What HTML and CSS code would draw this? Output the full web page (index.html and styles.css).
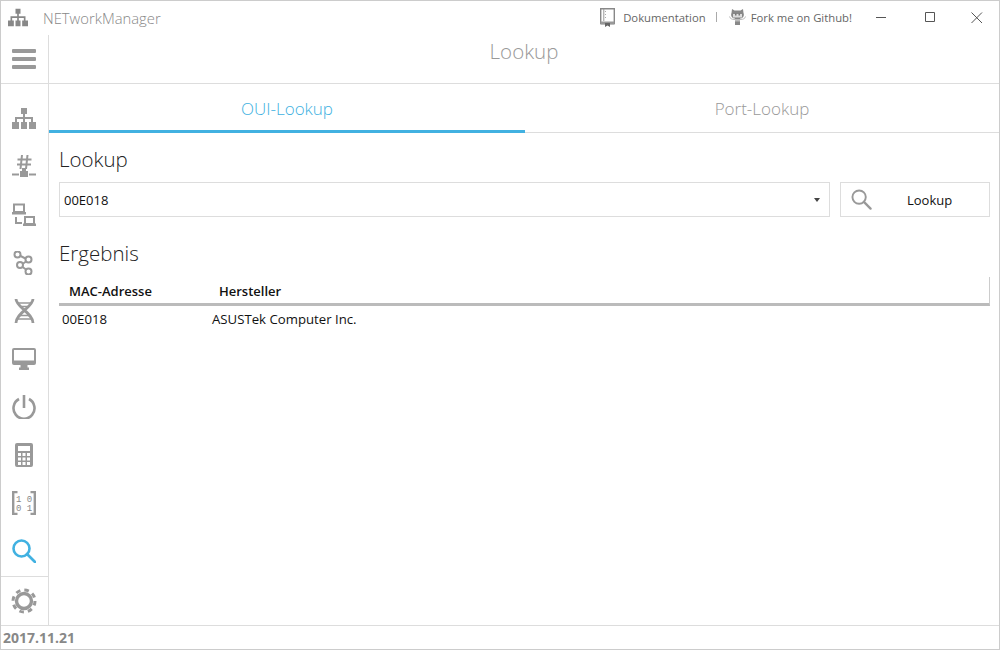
FILE: index.html
```html
<!DOCTYPE html>
<html>
	<head>
		<meta charset="UTF-8">
		<title>NETworkManager</title>
		<link rel="stylesheet" href="styles.css">
	</head>
	<body>
		<div class="window">
			<div class="titlebar">
				<svg class="app-icon" width="20" height="20" viewBox="0 0 24 24"><path d="M9 1h6v6h-2v3h8v5h3v7h-7v-7h2v-3h-6v3h2v7h-6v-7h2v-3H5v3h2v7H0v-7h3v-5h8V7H9z"/></svg>
				<span class="app-name">NETworkManager</span>
				<div class="links">
					<svg class="book-icon" width="15" height="19" viewBox="0 0 15 19"><path d="M.7 15.500V.7h13.600v14.800z" fill="none" stroke="#888" stroke-width="1.400"/><path d="M.7 13.500h13.600v3H.7z" fill="#999"/><path d="M3.800 1v12" stroke="#999"/><path d="M5.500 3v8" stroke="#aaa" stroke-dasharray="1 2"/><path d="M5 15h5v4l-2.500-1.500L5 19z" fill="#666"/></svg>
					<span class="link">Dokumentation</span>
					<span class="sep"></span>
					<svg class="cat-icon" width="17" height="18" viewBox="0 0 17 18"><path d="M3 1l2.500 1.500h6L14 1l.5 4c.6 1.300.5 3-.4 4-.8 1-2.100 1.500-3.100 1.500v6.500H6v-6.500c-1 0-2.300-.5-3.100-1.500-.9-1-1-2.700-.4-4z" fill="#888"/><path d="M4 6h9v3.500H4z" fill="#ddd"/><path d="M6 5.500h1.500v2H6zM9.500 5.500H11v2H9.500z" fill="#777"/><path d="M.5 8.500c.5 2 2 3 5.500 3M16.500 8.500c-.5 2-2 3-5.500 3" stroke="#bbb" fill="none"/><path d="M6 11h5v2.500H6z" fill="#bbb"/></svg>
					<span class="link">Fork me on Github!</span>
				</div>
				<div class="win-buttons">
					<svg width="48" height="32" viewBox="0 0 48 32"><path d="M17 15.500h10" stroke="#555"/></svg>
					<svg width="46" height="32" viewBox="0 0 46 32"><path d="M18.500 10.500h9v9h-9z" fill="none" stroke="#555"/></svg>
					<svg width="46" height="32" viewBox="0 0 46 32"><path d="M18.500 10.500l10.500 10.500M29 10.500L18.500 21" stroke="#555" fill="none"/></svg>
				</div>
			</div>
			<div class="body">
				<div class="sidebar">
					<div class="menu-btn">
						<span class="bar"></span>
						<span class="bar"></span>
						<span class="bar"></span>
					</div>
					<ul class="nav">
						<li><svg class="solid" width="24" height="24" viewBox="0 0 24 24"><path d="M9 1h6v6h-2v3h8v5h3v7h-7v-7h2v-3h-6v3h2v7h-6v-7h2v-3H5v3h2v7H0v-7h3v-5h8V7H9z"/></svg></li>
						<li><svg class="solid" width="24" height="24" viewBox="0 0 24 24"><path d="M10 0l-1.500 14M15.500 0L14 14M5.500 4.500h14M5 9.500h14" stroke="#999" stroke-width="2" fill="none"/><path d="M0 18.500h7v2H0zM17 18.500h7v2h-7z"/><path d="M10 13h4v3h2v6H8v-6h2z"/></svg></li>
						<li><svg class="solid" width="24" height="24" viewBox="0 0 24 24"><path d="M2 1.500h10v7.500H2z" fill="none" stroke="#999" stroke-width="2"/><path d="M0 9h14v2.500H0z"/><path d="M3 14h2v5h5v2H3z"/><path d="M13 14h9v7h-9z" fill="none" stroke="#999" stroke-width="2"/><path d="M11 20.500h13V23H11z"/></svg></li>
						<li><svg class="line" width="24" height="24" viewBox="0 0 24 24" stroke-width="2"><circle cx="5.500" cy="3.500" r="3"/><circle cx="16.500" cy="8.500" r="3"/><circle cx="8" cy="14" r="3"/><circle cx="16.500" cy="20.500" r="3"/><path d="M8.500 5l5 2.500M14 10.500L10.500 13M10.500 16l3.500 2.500"/></svg></li>
						<li><svg class="line" width="21" height="24" viewBox="0 0 21 24" stroke-width="2.800"><path d="M2 0c0 8 17 14 17 24M19 0c0 8-17 14-17 24"/><path d="M3 4h15M6 7.500h9M6 16.500h9M3 20h15" stroke-width="1.500"/></svg></li>
						<li><svg class="solid" width="24" height="24" viewBox="0 0 24 24"><path fill-rule="evenodd" d="M2 1h20a2 2 0 0 1 2 2v13a2 2 0 0 1-2 2h-6.500v2.500H17V23H7v-2.500h1.500V18H2a2 2 0 0 1-2-2V3a2 2 0 0 1 2-2zm0 2v10.500h20V3z"/></svg></li>
						<li><svg class="line" width="24" height="24" viewBox="0 0 24 24" stroke-width="2.600"><path d="M7 4A10.500 10.500 0 1 0 17 4"/><path d="M12 0v13"/></svg></li>
						<li><svg class="solid" width="24" height="24" viewBox="0 0 24 24"><path fill-rule="evenodd" d="M5 0h14a2 2 0 0 1 2 2v20a2 2 0 0 1-2 2H5a2 2 0 0 1-2-2V2a2 2 0 0 1 2-2zm1 3v5h12V3zm0 7v3h3v-3zm4.500 0v3h3v-3zm4.500 0v3h3v-3zM6 14.500v3h3v-3zm4.500 0v3h3v-3zm4.500 0v3h3v-3zM6 19v3h3v-3zm4.500 0v3h3v-3zm4.500 0v3h3v-3z"/></svg></li>
						<li><svg class="line" width="24" height="24" viewBox="0 0 24 24" stroke-width="2.400"><path d="M5.500 1H1.200v22h4.300M18.500 1h4.300v22h-4.300"/><text class="bits" x="12" y="10.500">1 0</text><text class="bits" x="12" y="20">0 1</text></svg></li>
						<li><svg class="current-icon" width="24" height="24" viewBox="0 0 24 24"><circle cx="9.500" cy="9.500" r="8"/><path d="M15 15l8 8" stroke-linecap="round"/></svg></li>
					</ul>
					<div class="settings-btn">
						<svg class="solid" width="26" height="26" viewBox="0 0 26 26"><circle cx="13" cy="13" r="7.500" fill="none" stroke="#999" stroke-width="3.400"/><circle cx="13" cy="13" r="11" fill="none" stroke="#999" stroke-width="3" stroke-dasharray="4.600 4.040"/></svg>
					</div>
				</div>
				<div class="content">
					<div class="page-title">Lookup</div>
					<div class="tabs">
						<div class="tab active">OUI-Lookup</div>
						<div class="tab">Port-Lookup</div>
					</div>
					<div class="panel">
						<h2 class="heading">Lookup</h2>
						<div class="search-row">
							<div class="combo">
								<span>00E018</span>
								<span class="caret"></span>
							</div>
							<div class="btn">
								<svg width="21" height="21" viewBox="0 0 22 22" fill="none" stroke="#999" stroke-width="2"><circle cx="8.500" cy="8.500" r="7"/><path d="M13.500 13.500l7 7" stroke-linecap="round" stroke-width="2.400"/></svg>
								<span class="btn-text">Lookup</span>
							</div>
						</div>
						<h2 class="heading result">Ergebnis</h2>
						<div class="table-head">
							<div class="col-mac">MAC-Adresse</div>
							<div>Hersteller</div>
						</div>
						<div class="table-row">
							<div class="cell-mac">00E018</div>
							<div>ASUSTek Computer Inc.</div>
						</div>
					</div>
				</div>
			</div>
			<div class="footer">2017.11.21</div>
		</div>
	</body>
</html>
```

FILE: styles.css
```css
*{
	margin:0;
	padding:0;
	box-sizing:border-box;
}
html,body{
	height:100%;
	overflow:hidden;
}
body{
	background:#fff;
	font-family:"Open Sans","Liberation Sans",sans-serif;
	font-size:13px;
	color:#111;
}
.window{
	display:flex;
	flex-direction:column;
	width:1000px;
	height:650px;
	border:1px solid #ccc;
}
.titlebar{
	display:flex;
	align-items:center;
	flex:none;
	height:34px;
}
.app-icon{
	fill:#888;
	margin-left:7px;
}
.app-name{
	margin-left:15px;
	font-size:14.800px;
	font-weight:300;
	color:#888;
}
.links{
	display:flex;
	align-items:center;
	margin-left:auto;
	padding-bottom:2px;
}
.book-icon{
	margin-right:8px;
}
.cat-icon{
	margin-right:5px;
}
.link{
	font-size:11.300px;
	color:#666;
}
.sep{
	width:1px;
	height:10px;
	margin:0 12px 0 10px;
	background:#aaa;
}
.win-buttons{
	display:flex;
	margin-left:7px;
}
.body{
	display:flex;
	flex:1;
	min-height:0;
}
.sidebar{
	display:flex;
	flex-direction:column;
	flex:none;
	width:48px;
	border-right:1px solid #ddd;
}
.solid{
	fill:#999;
}
.line{
	fill:none;
	stroke:#999;
}
.bits{
	fill:#888;
	stroke:none;
	font-family:"Liberation Mono",monospace;
	font-size:9px;
	text-anchor:middle;
}
.current-icon{
	fill:none;
	stroke:#41b1e1;
	stroke-width:2.600;
}
.menu-btn{
	display:flex;
	flex-direction:column;
	align-items:center;
	justify-content:center;
	gap:4px;
	flex:none;
	height:49px;
	padding-right:1px;
	border-bottom:1px solid #ddd;
}
.bar{
	width:24px;
	height:4px;
	background:#999;
	border-radius:1px;
}
.nav{
	flex:1;
	list-style:none;
	padding-top:11px;
	padding-right:1px;
}
.nav li{
	display:flex;
	align-items:center;
	justify-content:center;
	height:48px;
}
.settings-btn{
	display:flex;
	align-items:center;
	justify-content:center;
	flex:none;
	height:49px;
	padding-right:1px;
	border-top:1px solid #ddd;
}
.content{
	flex:1;
	display:flex;
	flex-direction:column;
	min-width:0;
}
.page-title{
	flex:none;
	height:49px;
	border-bottom:1px solid #ddd;
	font-size:20.500px;
	line-height:32px;
	font-weight:300;
	text-align:center;
	color:#999;
}
.tabs{
	display:flex;
	flex:none;
	height:49px;
	border-bottom:1px solid #ddd;
}
.tab{
	flex:1;
	display:flex;
	align-items:center;
	justify-content:center;
	padding-top:1px;
	font-size:17px;
	font-weight:300;
	color:#999;
}
.tab.active{
	flex:none;
	width:476px;
	margin-bottom:-1px;
	padding-top:2px;
	border-bottom:3px solid #41b1e1;
	color:#41b1e1;
}
.panel{
	flex:1;
	padding:12px 9px 0 10px;
}
.heading{
	height:28px;
	font-size:20.500px;
	line-height:28px;
	font-weight:300;
	color:#222;
}
.result{
	margin-top:22px;
}
.search-row{
	display:flex;
	gap:10px;
	margin-top:9px;
}
.combo{
	display:flex;
	align-items:center;
	justify-content:space-between;
	flex:1;
	height:35px;
	padding:0 9px 0 4px;
	border:1px solid #ddd;
}
.caret{
	width:0;
	height:0;
	border:solid transparent;
	border-width:4px 3px 0;
	border-top-color:#444;
}
.btn{
	display:flex;
	align-items:center;
	flex:none;
	width:150px;
	height:35px;
	padding-left:10px;
	border:1px solid #ddd;
}
.btn-text{
	flex:1;
	padding-left:35px;
}
.table-head{
	display:flex;
	align-items:center;
	height:29px;
	margin-top:10px;
	padding-left:10px;
	padding-top:1px;
	border-right:1px solid #ccc;
	border-bottom:3px solid #bbb;
	font-weight:600;
}
.col-mac{
	width:150px;
}
.table-row{
	display:flex;
	align-items:center;
	height:26px;
	padding-left:3px;
	font-size:13.200px;
}
.cell-mac{
	width:150px;
}
.footer{
	display:flex;
	align-items:center;
	flex:none;
	height:24px;
	padding-left:2px;
	border-top:1px solid #ddd;
	font-size:14px;
	font-weight:700;
	color:#888;
}
```
